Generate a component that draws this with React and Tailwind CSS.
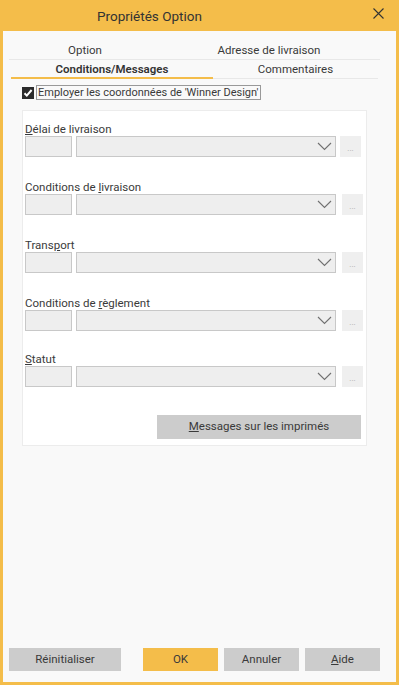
import { useState } from "react";

const font = { fontFamily: "Roboto, 'Noto Sans', sans-serif" };

// Ligne d'une liste déroulante avec code, combo et bouton "..."
function ComboRow({ label, offset = 0 }) {
  return (
    <div className="flex flex-col">
      <div className="h-[14px] text-[11.5px] leading-[14px] text-[#3a3a3a]">{label}</div>
      <div className="flex items-center h-[21px]">
        <div className="w-[47px] h-[21px] bg-[#eeeeee] border border-[#c8c8c8]" />
        <div className="ml-[4px] w-[260px] h-[21px] bg-[#eeeeee] border border-[#c8c8c8] flex items-center justify-end pr-[3px]">
          <svg width="15" height="9" viewBox="0 0 15 9" fill="none" stroke="#707070" strokeWidth="1.1">
            <path d="M1 1l6.5 6.5L14 1" />
          </svg>
        </div>
        <div
          className={
            "w-[21px] h-[21px] bg-[#efefef] flex items-end justify-center pb-[4px] text-[8px] leading-none text-[#aaa] " +
            (offset ? "ml-[6px]" : "ml-[4px]")
          }
        >
          ...
        </div>
      </div>
    </div>
  );
}

function App() {
  const [checked, setChecked] = useState(true);
  return (
    <div className="w-[399px] h-[686px] bg-white" style={font}>
      <div className="w-[399px] h-[685px] border-[3px] border-[#f4bd4a] flex flex-col">
        {/* Barre de titre */}
        <div className="h-[28px] bg-[#f4bd4a] flex items-center relative shrink-0">
          <div className="pl-[94px] text-[13.5px] text-[#333] leading-none pb-[1px]">Propriétés Option</div>
          <svg className="absolute left-[370px] top-[5px]" width="11" height="11" viewBox="0 0 11 11" stroke="#333" strokeWidth="1.1">
            <path d="M0.5 0.5l10 10M10.5 0.5l-10 10" />
          </svg>
        </div>

        <div className="flex-1 bg-[#f9f9f9] flex flex-col">
          {/* Onglets */}
          <div className="flex h-[28px] items-end pb-[2px] text-[11.5px] leading-[14px] text-[#3a3a3a]">
            <div className="w-[164px] text-center">Option</div>
            <div className="w-[204px] text-center">Adresse de livraison</div>
          </div>
          <div className="ml-[6px] w-[371px] h-px bg-[#e8e8e8]" />
          <div className="flex ml-[8px] w-[367px] border-b border-[#e8e8e8]">
            <div className="w-[203px] h-[19px] pt-[2px] text-center text-[11.5px] font-semibold leading-[14px] text-[#333] border-b-2 border-[#f4bd4a] -mb-px">
              Conditions/Messages
            </div>
            <div className="w-[166px] pt-[2px] text-center text-[11.5px] leading-[14px] text-[#3a3a3a]">Commentaires</div>
          </div>

          {/* Case à cocher */}
          <div className="flex items-center ml-[19px] mt-[6px] h-[15px]">
            <button
              onClick={() => setChecked(!checked)}
              className="w-[12px] h-[12px] bg-[#2b2b2b] flex items-center justify-center"
            >
              {checked && (
                <svg width="10" height="10" viewBox="0 0 10 10" fill="none" stroke="white" strokeWidth="2">
                  <path d="M1.5 5.2l2.3 2.4L8.6 2" />
                </svg>
              )}
            </button>
            <div className="ml-[2px] h-[15px] px-[1px] border border-[#999] text-[11px] leading-[13px] text-[#3a3a3a]">
              Employer les coordonnées de 'Winner Design'
            </div>
          </div>

          {/* Groupe conditions */}
          <div className="ml-[19px] mt-[10px] w-[345px] h-[336px] bg-white border border-[#ececec] pl-[2px] pt-[11px] flex flex-col">
            <div className="flex flex-col gap-[23px]">
              <ComboRow label={<><span className="underline">D</span>élai de livraison</>} />
              <ComboRow offset label={<>Conditions de <span className="underline">l</span>ivraison</>} />
              <ComboRow offset label={<>Trans<span className="underline">p</span>ort</>} />
              <ComboRow offset label={<>Conditions de <span className="underline">r</span>èglement</>} />
            </div>
            <div className="mt-[21px]">
              <ComboRow offset label={<><span className="underline">S</span>tatut</>} />
            </div>
            <div className="flex justify-end pr-[5px] mt-[28px]">
              <button className="w-[204px] h-[24px] bg-[#cccccc] text-[11.5px] text-[#3a3a3a]">
                <span className="underline">M</span>essages sur les imprimés
              </button>
            </div>
          </div>

          <div className="flex-1" />

          {/* Boutons */}
          <div className="flex items-center h-[23px] mb-[11px] text-[11.5px] text-[#3a3a3a]">
            <button className="ml-[6px] w-[112px] h-[23px] bg-[#cccccc]">Réinitialiser</button>
            <button className="ml-[22px] w-[75px] h-[23px] bg-[#f4bd4a]">OK</button>
            <button className="ml-[6px] w-[75px] h-[23px] bg-[#cccccc]">Annuler</button>
            <button className="ml-[6px] w-[75px] h-[23px] bg-[#cccccc]">
              <span className="underline">A</span>ide
            </button>
          </div>
        </div>
      </div>
    </div>
  );
}

export default App;
